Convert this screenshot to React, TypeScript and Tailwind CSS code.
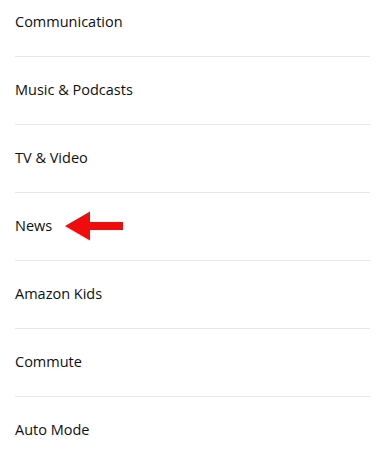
const items = ['Communication', 'Music & Podcasts', 'TV & Video', 'News', 'Amazon Kids', 'Commute', 'Auto Mode']

function Arrow() {
  return (
    <svg width="60" height="30" viewBox="0 0 60 30" className="ml-[13px]">
      <polygon points="0,15 25,0.5 25,11 58,11 58,19 25,19 25,29.5" fill="#f00c0c" />
    </svg>
  )
}

export default function App() {
  return (
    <div className="w-[385px] h-[450px] overflow-hidden bg-white" style={{ fontFamily: '"Open Sans", "Noto Sans", sans-serif' }}>
      <div className="-mt-[11px] px-[15px]">
        {items.map((label, i) => (
          <div
            key={label}
            className={'flex items-center h-[68px] pb-[2px] ' + (i < items.length - 1 ? 'border-b border-[#e6e6e6]' : '')}
          >
            <span className="text-[14.5px] text-[#0f0f0f]">{label}</span>
            {label === 'News' && <Arrow />}
          </div>
        ))}
      </div>
    </div>
  )
}
